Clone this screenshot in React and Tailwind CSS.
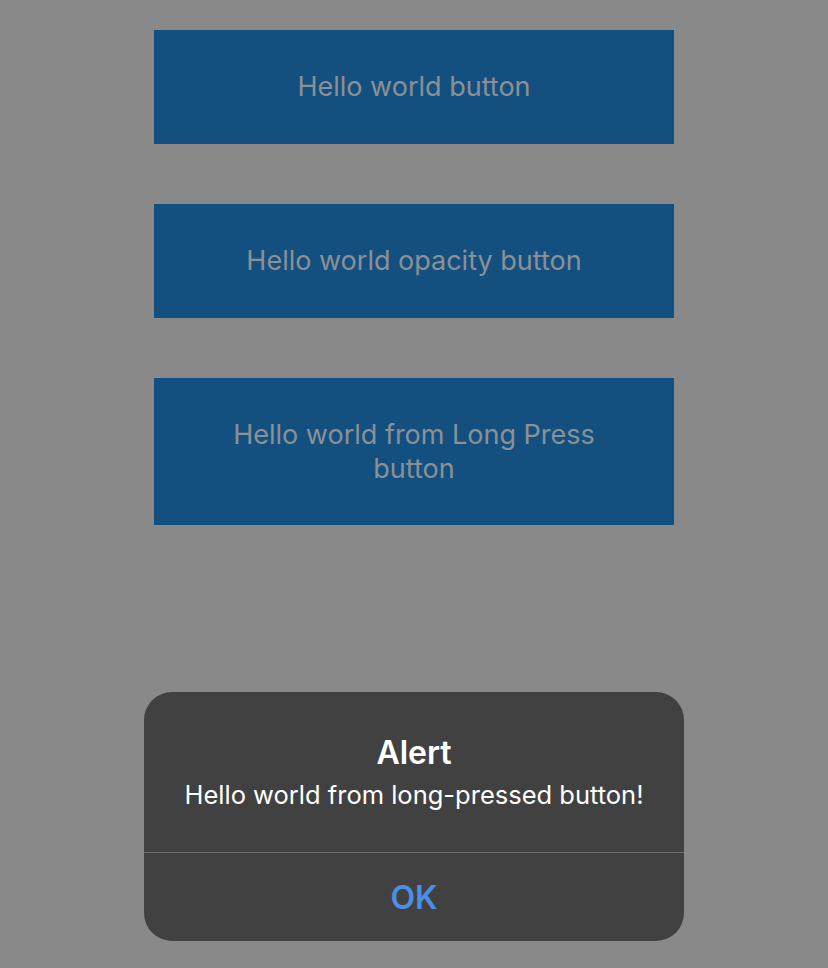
import React from 'react';

const font = { fontFamily: '"Inter", "Roboto", "Liberation Sans", sans-serif' };

function HelloButton({ label, className }) {
  return (
    <button
      className={`w-[520px] bg-[#13507f] text-[27px] leading-[34px] text-[#8b9096] text-center px-12 ${className}`}
    >
      {label}
    </button>
  );
}

export default function App() {
  return (
    <div className="min-h-[968px] w-[828px] bg-[#898989] flex flex-col items-center" style={font}>
      {/* buttons behind the dimmed overlay */}
      <div className="flex flex-col items-center gap-[60px] pt-[30px]">
        <HelloButton label="Hello world button" className="h-[114px]" />
        <HelloButton label="Hello world opacity button" className="h-[114px]" />
        <HelloButton label="Hello world from Long Press button" className="h-[147px] px-[72px]" />
      </div>

      {/* alert dialog */}
      <div className="mt-[167px] w-[540px] rounded-[28px] bg-[#414141] overflow-hidden">
        <div className="h-[160px] flex flex-col items-center pt-[41px]">
          <div className="text-[32px] leading-[40px] font-semibold text-white">Alert</div>
          <div className="mt-[5px] text-[25.5px] leading-[34px] text-white">
            Hello world from long-pressed button!
          </div>
        </div>
        <div className="h-px bg-[#6a6a6a]" />
        <div className="h-[88px] flex items-center justify-center pt-[2px]">
          <span className="text-[32px] font-semibold text-[#4a8fe6]">OK</span>
        </div>
      </div>
    </div>
  );
}
